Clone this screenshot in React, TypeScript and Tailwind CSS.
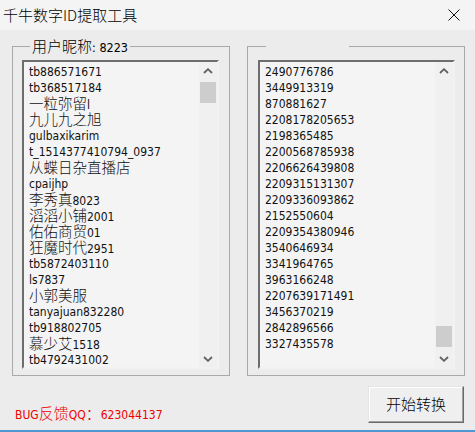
import React from 'react';

const latin = '"DejaVu Sans Condensed", "Liberation Sans", "Noto Sans CJK SC", sans-serif';
const cjk = '"Noto Sans CJK SC", "Liberation Sans", sans-serif';

const users = [
    'tb886571671',
    'tb368517184',
    '一粒弥留l',
    '九儿九之旭',
    'gulbaxikarim',
    't_1514377410794_0937',
    '从蝶日杂直播店',
    'cpaijhp',
    '李秀真8023',
    '滔滔小铺2001',
    '佑佑商贸01',
    '狂魔时代2951',
    'tb5872403110',
    'ls7837',
    '小郭美服',
    'tanyajuan832280',
    'tb918802705',
    '慕少艾1518',
    'tb4792431002',
];

const ids = [
    '2490776786',
    '3449913319',
    '870881627',
    '2208178205653',
    '2198365485',
    '2200568785938',
    '2206626439808',
    '2209315131307',
    '2209336093862',
    '2152550604',
    '2209354380946',
    '3540646934',
    '3341964765',
    '3963166248',
    '2207639171491',
    '3456370219',
    '2842896566',
    '3327435578',
];

// CJK runs are drawn larger than the latin ones, like the original form
const Mixed = ({ text }: { text: string }) => {
    const parts = text.split(/([\u3000-\u9fff\uff00-\uffef]+)/).filter(Boolean);
    return (
        <>
            {parts.map((p, i) =>
                /[\u3000-\u9fff\uff00-\uffef]/.test(p) ? (
                    <span key={i} className="inline-block h-[16px] leading-[16px] text-[14.5px] font-light" style={{ fontFamily: cjk }}>{p}</span>
                ) : (
                    <span key={i} className="text-[12px]">{p}</span>
                )
            )}
        </>
    );
};

const Chevron = ({ up }: { up?: boolean }) => (
    <svg width="10" height="6" viewBox="0 0 10 6" className={up ? '' : 'rotate-180'}>
        <path d="M1 5 L5 1.2 L9 5" fill="none" stroke="#606060" strokeWidth="1.8" />
    </svg>
);

const ListBox = ({ items, thumbTop }: { items: string[]; thumbTop: boolean }) => (
    <div className="w-[197px] h-[309px] flex bg-[#f4f4f4] border-2 border-t-[#6e6e6e] border-l-[#6e6e6e] border-r-[#f2f2f2] border-b-[#f2f2f2] overflow-hidden">
        <div className="flex-1 pl-[5px] pt-[1px] overflow-hidden text-[#111]" style={{ fontFamily: latin }}>
            {items.map((t, i) => (
                <div key={i} className="h-[16px] leading-[16px] whitespace-nowrap">
                    <Mixed text={t} />
                </div>
            ))}
        </div>
        <div className="w-[18px] flex flex-col bg-[#f0f0f0]">
            <div className="h-[17px] flex items-center justify-center">
                <Chevron up />
            </div>
            <div className={`flex-1 flex flex-col px-[1px] pt-[3px] pb-[3px] ${thumbTop ? 'justify-start' : 'justify-end'}`}>
                <div className="h-[21px] bg-[#cdcdcd]" />
            </div>
            <div className="h-[17px] flex items-center justify-center">
                <Chevron />
            </div>
        </div>
    </div>
);

export default function App() {
    return (
        <div className="w-[475px] h-[432px] flex flex-col bg-[#ececec] text-black overflow-hidden">
            <div className="h-[30px] flex items-center justify-between pl-[3px] pr-[15px] bg-[#f4f4f4]">
                <span className="text-[15px] leading-[20px] font-light" style={{ fontFamily: cjk }}>千牛数字ID提取工具</span>
                <svg width="12" height="12" viewBox="0 0 12 12">
                    <path d="M0.5 0.5 L11.5 11.5 M11.5 0.5 L0.5 11.5" stroke="#111" strokeWidth="1" />
                </svg>
            </div>

            <div className="flex-1 flex flex-col pl-[12px] pr-[11px] pt-[6px]">
                <div className="flex gap-[17px]">
                    <fieldset className="w-[218px] border border-[#a9a9a9] pl-[9px] pr-[10px] pt-[4px] pb-[6px]">
                        <legend className="ml-[8px] px-[2px] h-[20px] leading-[20px] whitespace-nowrap" style={{ fontFamily: latin }}>
                            <span className="text-[15px] font-light" style={{ fontFamily: cjk }}>用户昵称</span>
                            <span className="text-[12.5px]">: 8223</span>
                        </legend>
                        <ListBox items={users} thumbTop />
                    </fieldset>
                    <fieldset className="w-[217px] border border-[#a9a9a9] pl-[10px] pr-[9px] pt-[4px] pb-[6px]">
                        <legend className="ml-[8px] w-[83px] h-[20px]" />
                        <ListBox items={ids} thumbTop={false} />
                    </fieldset>
                </div>

                <div className="flex items-end justify-between mt-[10px] pl-[3px]">
                    <div className="h-[20px] leading-[20px] text-[#ee0000] whitespace-nowrap" style={{ fontFamily: latin }}>
                        <span className="text-[12px]">BUG</span>
                        <span className="text-[15px] font-light" style={{ fontFamily: cjk }}>反馈</span>
                        <span className="text-[12px]">QQ</span>
                        <span className="text-[15px] font-light" style={{ fontFamily: cjk }}>：</span>
                        <span className="text-[12px]">623044137</span>
                    </div>
                    <button className="w-[96px] h-[37px] flex items-center justify-center bg-[#efefef] border border-t-[#e4e4e4] border-l-[#e4e4e4] border-r-[#6a6a6a] border-b-[#6a6a6a] shadow-[inset_-1px_-1px_0_#a0a0a0,inset_1px_1px_0_#ffffff] text-[15px] font-light" style={{ fontFamily: cjk }}>
                        开始转换
                    </button>
                </div>
            </div>

            <div className="h-[2px] mt-[6px] bg-[#4f97d2]" />
        </div>
    );
}
